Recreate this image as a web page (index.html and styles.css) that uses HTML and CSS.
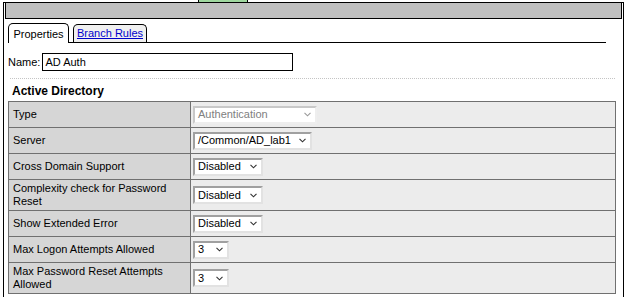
FILE: index.html
```html
<!DOCTYPE html>
<html lang="en">
<head>
    <meta charset="UTF-8">
    <title>AD Auth</title>
    <link rel="stylesheet" href="styles.css">
</head>
<body>

    <!-- bout de la fenêtre derrière -->
    <div class="backdrop">
        <div class="green-tab"></div>
    </div>

    <div class="panel">
        <div class="titlebar"></div>

        <!-- Onglets -->
        <div class="tabs">
            <div class="tab active">Properties</div>
            <div class="tab"><a href="#">Branch Rules</a></div>
        </div>

        <div class="name-row">
            <label for="name-input">Name:</label>
            <input type="text" id="name-input" value="AD Auth">
        </div>

        <div class="divider"></div>

        <h3 class="section-title">Active Directory</h3>

        <table class="props">
            <tr>
                <td class="label">Type</td>
                <td class="value">
                    <div class="select disabled w-type"><span>Authentication</span><svg width="7" height="5" viewBox="0 0 7 5"><polyline points="0.5,0.8 3.5,3.8 6.5,0.8"/></svg></div>
                </td>
            </tr>
            <tr>
                <td class="label">Server</td>
                <td class="value">
                    <div class="select w-server"><span>/Common/AD_lab1</span><svg width="7" height="5" viewBox="0 0 7 5"><polyline points="0.5,0.8 3.5,3.8 6.5,0.8"/></svg></div>
                </td>
            </tr>
            <tr>
                <td class="label">Cross Domain Support</td>
                <td class="value">
                    <div class="select w-toggle"><span>Disabled</span><svg width="7" height="5" viewBox="0 0 7 5"><polyline points="0.5,0.8 3.5,3.8 6.5,0.8"/></svg></div>
                </td>
            </tr>
            <tr>
                <td class="label">Complexity check for Password Reset</td>
                <td class="value">
                    <div class="select w-toggle"><span>Disabled</span><svg width="7" height="5" viewBox="0 0 7 5"><polyline points="0.5,0.8 3.5,3.8 6.5,0.8"/></svg></div>
                </td>
            </tr>
            <tr>
                <td class="label">Show Extended Error</td>
                <td class="value">
                    <div class="select w-toggle"><span>Disabled</span><svg width="7" height="5" viewBox="0 0 7 5"><polyline points="0.5,0.8 3.5,3.8 6.5,0.8"/></svg></div>
                </td>
            </tr>
            <tr>
                <td class="label">Max Logon Attempts Allowed</td>
                <td class="value">
                    <div class="select w-num"><span>3</span><svg width="7" height="5" viewBox="0 0 7 5"><polyline points="0.5,0.8 3.5,3.8 6.5,0.8"/></svg></div>
                </td>
            </tr>
            <tr>
                <td class="label">Max Password Reset Attempts Allowed</td>
                <td class="value">
                    <div class="select w-num"><span>3</span><svg width="7" height="5" viewBox="0 0 7 5"><polyline points="0.5,0.8 3.5,3.8 6.5,0.8"/></svg></div>
                </td>
            </tr>
        </table>
    </div>

</body>
</html>
```

FILE: styles.css
```css
html, body {
    margin: 0;
    height: 297px;
    overflow: hidden;
}

body {
    font-family: "Liberation Sans", Arial, sans-serif;
    font-size: 11px;
    color: #000;
    background-color: #fff;
}

/* Fenêtre derrière le panneau */
.backdrop {
    height: 2px;
}

.green-tab {
    margin-left: 198px;
    width: 48px;
    height: 2px;
    border-left: 1px solid #000;
    border-right: 1px solid #000;
    background-color: #9fd89f;
}

/* Panneau principal */
.panel {
    margin-left: 3px;
    width: 621px;
    height: 300px;
    box-sizing: border-box;
    border: 1px solid #000;
    border-bottom: none;
}

.titlebar {
    margin: 0 1px;
    height: 15px;
    border: 1px solid #000;
    border-top: none;
    background-color: #c0c0c0;
}

/* Onglets */
.tabs {
    display: flex;
    align-items: flex-end;
    gap: 4px;
    margin-left: 4px;
    width: 598px;
    height: 19px;
    padding-top: 4px;
    border-bottom: 1px solid #000;
}

.tab {
    box-sizing: border-box;
    height: 18px;
    line-height: 16px;
    text-align: center;
    border: 1px solid #000;
    border-bottom: none;
    border-radius: 5px 5px 0 0;
    background-color: #f0f0f0;
}

.tab a {
    color: #0000cc;
    text-decoration: underline;
}

.tab.active {
    width: 61px;
    height: 20px;
    margin-bottom: -1px;
    line-height: 20px;
    background-color: #fff;
}

.tab:not(.active) {
    width: 74px;
}

/* Nom */
.name-row {
    display: flex;
    align-items: center;
    gap: 2px;
    margin: 10px 0 0 4px;
}

.name-row input {
    box-sizing: border-box;
    width: 251px;
    height: 18px;
    padding: 0 2px;
    border: 1px solid #000;
    font-family: inherit;
    font-size: 11px;
    outline: none;
}

.divider {
    margin: 7px 0 0 6px;
    width: 605px;
    border-top: 1px dotted #c4c4c4;
}

.section-title {
    margin: 5px 0 0 8px;
    font-size: 12px;
    line-height: 14px;
    font-weight: bold;
}

/* Tableau des propriétés */
.props {
    margin: 3px 0 0 4px;
    width: 608px;
    border-collapse: collapse;
    table-layout: fixed;
}

.props td {
    border: 1px solid #707070;
    height: 21px;
    padding: 2px 8px 2px 4px;
    line-height: 13px;
    vertical-align: middle;
}

.props td.label {
    width: 169px;
    background-color: #d6d6d6;
}

.props td.value {
    padding-left: 2px;
    background-color: #ececec;
}

/* Listes déroulantes */
.select {
    display: flex;
    align-items: center;
    box-sizing: border-box;
    height: 18px;
    padding: 0 4px 0 3px;
    border: 2px solid;
    border-color: #a0a0a0 #e2e2e2 #e2e2e2 #a0a0a0;
    background-color: #fff;
}

.select svg {
    margin-left: auto;
    fill: none;
    stroke: #333;
    stroke-width: 1.1;
}

.select.disabled {
    color: #808080;
    border-color: #c8c8c8 #eeeeee #eeeeee #c8c8c8;
}

.select.disabled svg {
    stroke: #999;
}

.w-type { width: 124px; }
.w-server { width: 119px; }
.w-toggle { width: 70px; }
.w-num { width: 36px; }
```
